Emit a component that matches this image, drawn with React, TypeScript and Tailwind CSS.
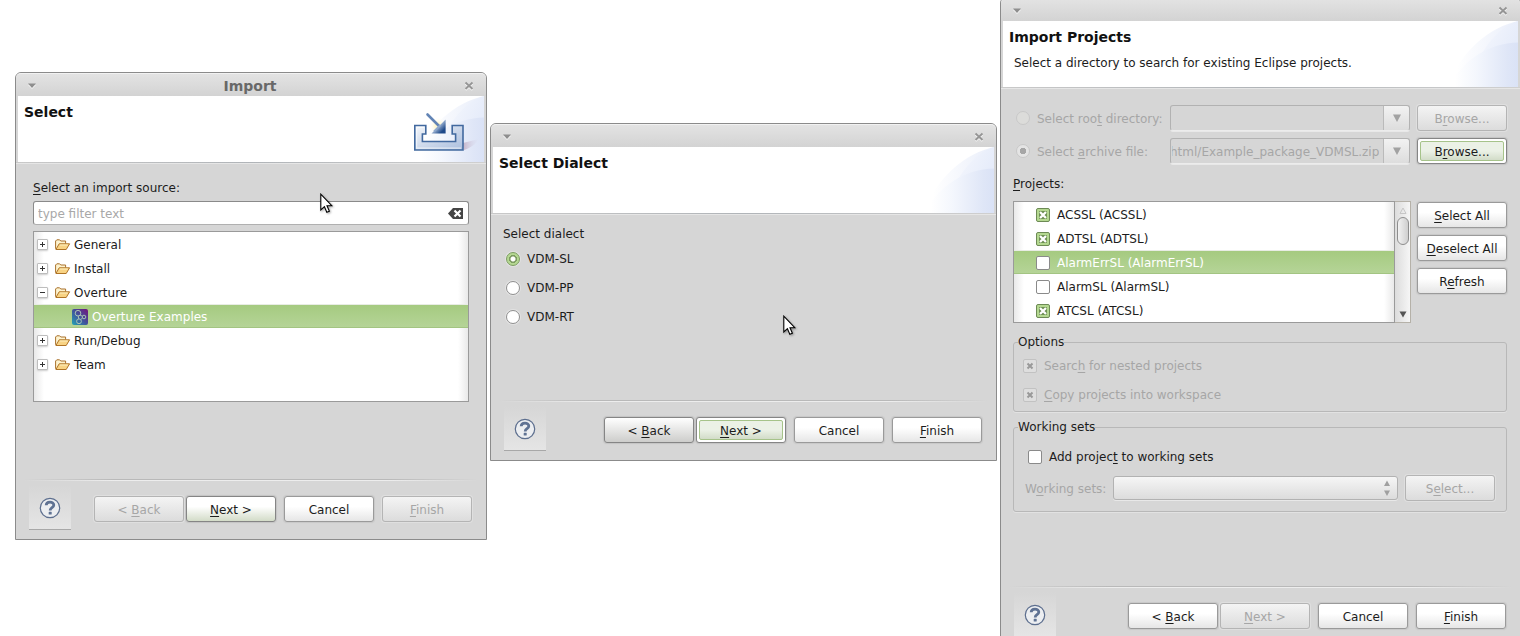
import { ReactNode, useEffect, useRef } from "react";

const FONT = "font-['DejaVu_Sans',sans-serif]";

type Tone = "plain" | "default" | "focused" | "hover";

function PushButton({ children, tone = "plain", disabled = false }: { children: ReactNode; tone?: Tone; disabled?: boolean }) {
  const base = "relative h-[26px] w-[90px] shrink-0 rounded-[3px] border pt-0.5 text-center leading-4 whitespace-nowrap";
  const look = disabled
    ? "border-[#b4b4b4] bg-linear-to-b from-[#f4f4f4] to-[#dcdcdc] text-[#a6a6a6] shadow-[0_0_0_1px_#dfdfdf]"
    : tone === "default"
      ? "border-[#858585] bg-linear-to-b from-white from-40% to-[#d3dcc8] text-[#1c1c1c] shadow-[0_0_1px_1px_#c4c4c4]"
      : tone === "hover"
        ? "border-[#858585] bg-linear-to-b from-white to-[#cdcdcb] text-[#1c1c1c] shadow-[0_0_1px_1px_#c4c4c4]"
        : tone === "focused"
          ? "border-[#858585] bg-white text-[#1c1c1c] shadow-[0_0_1px_1px_#c4c4c4]"
          : "border-[#9a9a9a] bg-linear-to-b from-white from-40% to-[#e6e6e6] text-[#1c1c1c] shadow-[0_0_1px_1px_#c8c8c8]";
  return (
    <button type="button" disabled={disabled} className={`${base} ${look}`}>
      {tone === "focused" ? (
        <span className="absolute inset-[2px] flex items-center justify-center rounded-[2px] border border-[#a6c38a] bg-linear-to-b from-[#ebf1e6] from-50% to-[#d2dcc8] pt-0.5">
          <span>{children}</span>
        </span>
      ) : (
        children
      )}
    </button>
  );
}

function U({ children }: { children: ReactNode }) {
  return <u className="underline underline-offset-2">{children}</u>;
}

function Rule() {
  return (
    <div className="mx-2">
      <div className="h-px bg-[linear-gradient(to_right,transparent,#b9b9b9_20%,#b9b9b9_80%,transparent)]" />
      <div className="h-px bg-[linear-gradient(to_right,transparent,#ededed_20%,#ededed_80%,transparent)]" />
    </div>
  );
}

function Swoosh({ id, withIcon = false }: { id: string; withIcon?: boolean }) {
  return (
    <svg width="74" height="66" viewBox="0 0 74 66" className="shrink-0" aria-hidden="true">
      <defs>
        <linearGradient id={`${id}a`} x1="0" x2="1">
          <stop offset="0.15" stopColor="#fff" />
          <stop offset="1" stopColor="#e9eefa" />
        </linearGradient>
        <linearGradient id={`${id}b`} x1="0" x2="1">
          <stop offset="0.1" stopColor="#fff" />
          <stop offset="0.4" stopColor="#f4f7fd" />
          <stop offset="0.85" stopColor="#dfe6f7" />
          <stop offset="1" stopColor="#dae2f6" />
        </linearGradient>
        <linearGradient id={`${id}c`} x1="0" x2="1" y2="0.4">
          <stop offset="0" stopColor="#f6f8fd" />
          <stop offset="1" stopColor="#e6ecfa" />
        </linearGradient>
        <linearGradient id={`${id}d`} x1="0" x2="1" y1="0" y2="1">
          <stop offset="0" stopColor="#f4f7fb" />
          <stop offset="0.6" stopColor="#c6d3e8" />
          <stop offset="1" stopColor="#a9bede" />
        </linearGradient>
        <linearGradient id={`${id}e`} x1="0" x2="1" y1="0" y2="1">
          <stop offset="0.4" stopColor="#b9cbe4" />
          <stop offset="0.8" stopColor="#1f4a8a" />
        </linearGradient>
        <linearGradient id={`${id}f`} x1="0" x2="1">
          <stop offset="0" stopColor="#c5b3c8" />
          <stop offset="1" stopColor="#dde3f5" stopOpacity="0.2" />
        </linearGradient>
        <radialGradient id={`${id}g`}>
          <stop offset="0.3" stopColor="#fdf7cf" />
          <stop offset="1" stopColor="#fff" stopOpacity="0" />
        </radialGradient>
      </defs>
      <path d="M2 66C20 27 45 7 74 0V66Z" fill={`url(#${id}a)`} />
      <path d="M36 36C46 18 58 5 74 0V22C60 23 48 28 36 36Z" fill={`url(#${id}c)`} />
      <path d="M4 66C20 38 45 22 74 21.5V66Z" fill={`url(#${id}b)`} />
      {withIcon && (
        <g>
          <path d="M54 54C60 52 66 48 69 43L53 47Z" fill={`url(#${id}f)`} />
          <circle cx="28" cy="30" r="9" fill={`url(#${id}g)`} />
          <path d="M4.8 29.5H15.8V38H12.4V45.5H45.6V38H42.2V29.5H53V54H4.8Z" fill={`url(#${id}d)`} stroke="#42699f" strokeWidth="1.6" />
          <path d="M6.6 31.3H14M6.6 31.3V52.2H51" fill="none" stroke="#fff" strokeOpacity="0.6" strokeWidth="1.2" />
          <path d="M17.5 18.5L28.5 29.5" stroke="#6284b5" strokeWidth="2.6" strokeLinecap="round" />
          <path d="M35.6 23.5V37.6H21.5Z" fill={`url(#${id}e)`} />
          <path d="M24 35.5L30.5 29" stroke="#8ea8cd" strokeWidth="2" />
        </g>
      )}
    </svg>
  );
}

function HelpButton() {
  return (
    <button
      type="button"
      aria-label="Help"
      className="flex h-[45px] w-[42px] items-center justify-center border-b border-[#a8a8a8] bg-linear-to-b from-[#d6d6d6] to-[#e5e5e5] pt-0.5"
    >
      <svg width="22" height="22" viewBox="0 0 22 22" aria-hidden="true">
        <circle cx="11" cy="11" r="9.7" fill="#eceef1" stroke="#5c6e8e" strokeWidth="1.2" />
        <path d="M7.2 8.3C7.2 4 14.8 4.1 14.8 8C14.8 10.7 11.2 10.6 11.2 13.4" fill="none" stroke="#5f7293" strokeWidth="2.8" />
        <rect x="9.7" y="14.8" width="3" height="2.8" rx="0.6" fill="#5f7293" />
      </svg>
    </button>
  );
}

function Dialog({
  className,
  title = "",
  heading,
  description,
  id,
  withIcon = false,
  buttons,
  children,
}: {
  className: string;
  title?: string;
  heading: string;
  description?: string;
  id: string;
  withIcon?: boolean;
  buttons: ReactNode;
  children: ReactNode;
}) {
  return (
    <section aria-label={heading} className={`flex min-w-0 flex-col rounded-t-[6px] border border-[#8b8b8b] bg-[#d6d6d6] ${className}`}>
      <div className="flex h-[23px] shrink-0 items-center justify-between rounded-t-[5px] border-t border-[#f2f2f2] bg-linear-to-b from-[#e3e3e3] to-[#d3d3d3] px-3 pt-0.5">
        <button type="button" aria-label="Window menu">
          <svg width="8" height="6" viewBox="0 0 8 6" className="block" aria-hidden="true">
            <path d="M0 2H8L4 6Z" fill="#f4f4f4" />
            <path d="M0 0.5H8L4 5Z" fill="#8e8e8e" />
          </svg>
        </button>
        <span className="text-[14px] leading-4 font-bold text-[#686868]">{title}</span>
        <button type="button" aria-label="Close">
          <svg width="10" height="10" viewBox="0 0 10 10" className="block" aria-hidden="true">
            <path d="M1.5 2.5L8.5 9M8.5 2.5L1.5 9" stroke="#f6f6f6" strokeWidth="2" />
            <path d="M1.5 1.5L8.5 8M8.5 1.5L1.5 8" stroke="#959595" strokeWidth="1.8" />
          </svg>
        </button>
      </div>
      <header className="mx-0.5 flex h-[66px] shrink-0 justify-between bg-white">
        <div className="flex flex-col gap-[10px] pt-2 pl-1.5">
          <h1 className="text-[14px] leading-4 font-bold text-[#111]">{heading}</h1>
          {description && <p className="pl-[5px] leading-4 text-[#1c1c1c]">{description}</p>}
        </div>
        <Swoosh id={id} withIcon={withIcon} />
      </header>
      <div className="h-px shrink-0 bg-linear-to-r from-[#c9c9c9] via-[#b0b4b8] to-[#d0d0d0]" />
      <div className="h-px shrink-0 bg-[#e6e6e6]" />
      {children}
      <footer className="mt-auto pb-[9px]">
        <Rule />
        <div className="flex items-start justify-between pr-[14px] pl-[13px]">
          <div className="pt-1">
            <HelpButton />
          </div>
          <div className="flex gap-2 pt-[15px]">{buttons}</div>
        </div>
      </footer>
    </section>
  );
}

function FolderIcon() {
  return (
    <svg width="16" height="12" viewBox="0 0 16 12" className="shrink-0" aria-hidden="true">
      <path d="M0.6 9.8V2L1.8 0.8H4.6L5.8 2H10.6V4.6" fill="#fdf3cf" stroke="#a9712c" />
      <path d="M0.9 10.5L4.2 4.8H14.6L11.2 10.5Z" fill="#f8d384" stroke="#b07426" />
      <path d="M4.8 6H12.8" stroke="#fdf0c0" />
    </svg>
  );
}

function TreeBranch({ label, open = false }: { label: string; open?: boolean }) {
  return (
    <div className="flex h-6 items-center pt-0.5 pl-[3px]">
      <button
        type="button"
        aria-label={open ? `Collapse ${label}` : `Expand ${label}`}
        className="mb-0.5 size-[11px] rounded-[1px] border border-[#bdbdbd] bg-white shadow-[0_1px_2px_#ccc]"
      >
        <svg width="9" height="9" viewBox="0 0 9 9" className="block" aria-hidden="true">
          <path d={open ? "M2 4.5H7" : "M2 4.5H7M4.5 2V7"} stroke="#333" />
        </svg>
      </button>
      <span className="flex items-center gap-[3px] pl-[7px]">
        <FolderIcon />
        <span>{label}</span>
      </span>
    </div>
  );
}

function OvertureIcon() {
  return (
    <svg width="16" height="16" viewBox="0 0 16 16" className="shrink-0" aria-hidden="true">
      <defs>
        <linearGradient id="ov" x1="0" x2="1" y1="1" y2="0">
          <stop offset="0" stopColor="#22a5b5" />
          <stop offset="0.5" stopColor="#41519b" />
          <stop offset="1" stopColor="#74127c" />
        </linearGradient>
      </defs>
      <rect width="16" height="16" rx="2" fill="url(#ov)" />
      <g fill="none" stroke="#a9c3b4">
        <circle cx="6" cy="4.2" r="2.8" />
        <circle cx="12" cy="8" r="1.8" />
        <circle cx="7" cy="12.3" r="2.4" />
        <path d="M6.3 7L6.8 10M8 6L10.3 7.2M8.6 10.6L10.5 9" />
      </g>
    </svg>
  );
}

function CheckBox({ id, checked = false, disabled = false }: { id: string; checked?: boolean; disabled?: boolean }) {
  return (
    <span className="grid size-[14px] shrink-0">
      <input
        id={id}
        type="checkbox"
        defaultChecked={checked}
        disabled={disabled}
        className="peer size-[14px] appearance-none rounded-[2px] border border-[#8a8a8a] bg-white [grid-area:1/1] checked:border-[#6d8a55] checked:bg-[#b4d890] disabled:border-[#c2c2c2] disabled:bg-[#dedede]"
      />
      <svg
        width="14"
        height="14"
        viewBox="0 0 14 14"
        className="pointer-events-none hidden [grid-area:1/1] peer-checked:block"
        aria-hidden="true"
      >
        {disabled ? (
          <path d="M4.5 4.5L9.5 9.5M9.5 4.5L4.5 9.5" stroke="#999" strokeWidth="2" />
        ) : (
          <g>
            <rect x="3" y="3" width="8" height="8" rx="1" fill="#6d8f52" />
            <path d="M4 4L10 10M10 4L4 10" stroke="#fff" strokeWidth="2.3" />
          </g>
        )}
      </svg>
    </span>
  );
}

function Radio({ id, name, checked = false, disabled = false }: { id: string; name: string; checked?: boolean; disabled?: boolean }) {
  return (
    <input
      id={id}
      type="radio"
      name={name}
      defaultChecked={checked}
      disabled={disabled}
      className={
        disabled
          ? "size-[14px] shrink-0 appearance-none rounded-full border border-[#c8c8c8] bg-[#dcdcda] checked:bg-[radial-gradient(circle,#a6a6a6_3px,#e4e4e4_3.5px)]"
          : "size-[14px] shrink-0 appearance-none rounded-full border border-[#8e8e8e] bg-white shadow-[0_0_0_1px_#e2e2e2] checked:border-[#7b9b60] checked:bg-[radial-gradient(circle,#ffffff_2px,#7d9b62_3px,#7d9b62_4px,#b5d892_4px)]"
      }
    />
  );
}

function Combo({ id, label, value }: { id: string; label: string; value: string }) {
  const field = useRef<HTMLInputElement>(null);
  useEffect(() => {
    if (field.current) field.current.scrollLeft = field.current.scrollWidth;
  }, []);
  return (
    <div className="flex h-[26px] min-w-0 flex-1 rounded-[3px] border border-[#b2b2b2] border-b-[#ececec] shadow-[0_1px_0_#e8e8e8]">
      <input
        ref={field}
        id={id}
        aria-label={label}
        disabled
        defaultValue={value}
        className="w-0 min-w-0 flex-1 bg-transparent pt-0.5 pr-1 pl-px text-[#a6a6a6]"
      />
      <button
        type="button"
        disabled
        aria-label="Show choices"
        className="flex w-[26px] items-center justify-center rounded-r-[3px] border-l border-[#bababa] bg-linear-to-b from-[#f2f2f2] to-[#dddddd]"
      >
        <svg width="8" height="8" viewBox="0 0 8 8" aria-hidden="true">
          <path d="M0 0.5H8L4 8Z" fill="#a2a2a2" />
        </svg>
      </button>
    </div>
  );
}

function Pointer({ className }: { className: string }) {
  return (
    <svg width="14" height="22" viewBox="0 0 14 22" className={`absolute drop-shadow-[1px_1px_1px_rgba(0,0,0,0.35)] ${className}`} aria-hidden="true">
      <path d="M0.8 1.2V17L4.4 13.6L6.8 19.3L9.4 18.2L7 12.7H11.8Z" fill="#fff" stroke="#000" strokeWidth="1.1" />
    </svg>
  );
}

const projects = [
  { name: "ACSSL (ACSSL)", checked: true },
  { name: "ADTSL (ADTSL)", checked: true },
  { name: "AlarmErrSL (AlarmErrSL)", checked: false, selected: true },
  { name: "AlarmSL (AlarmSL)", checked: false },
  { name: "ATCSL (ATCSL)", checked: true },
];

const listBg = "bg-[linear-gradient(to_right,#e9e9e9,#fff_10px,#fff_calc(100%-10px),#e9e9e9)]";
const selectedRow = "border-y border-t-[#e8ece4] border-b-[#a3c482] bg-linear-to-b from-[#a5ca80] to-[#b5d497] text-white";

function ImportDialog() {
  return (
    <Dialog
      id="sa"
      className="mt-[72px] min-h-[468px]"
      title="Import"
      heading="Select"
      withIcon
      buttons={
        <>
          <div className="flex gap-0.5">
            <PushButton disabled>
              &lt; <U>B</U>ack
            </PushButton>
            <PushButton tone="default">
              <U>N</U>ext &gt;
            </PushButton>
          </div>
          <PushButton>Cancel</PushButton>
          <PushButton disabled>
            <U>F</U>inish
          </PushButton>
        </>
      }
    >
      <div className="flex flex-col px-[17px] pt-4">
        <label htmlFor="filter" className="leading-4">
          <U>S</U>elect an import source:
        </label>
        <div className="mt-[5px] flex h-6 items-center rounded-[3px] border border-[#8a8a8a] border-b-[#b0b0b0] bg-white pr-[5px] pl-1">
          <input id="filter" type="text" placeholder="type filter text" className="min-w-0 flex-1 bg-transparent pt-0.5 placeholder:text-[#a8a8a8]" />
          <button type="button" aria-label="Clear filter">
            <svg width="15" height="11" viewBox="0 0 15 11" className="block" aria-hidden="true">
              <path d="M0 5.5L5 0H15V11H5Z" fill="#444" />
              <path d="M6.5 2.5L12.5 8.5M12.5 2.5L6.5 8.5" stroke="#fff" strokeWidth="2.2" />
            </svg>
          </button>
        </div>
        <div className={`mt-1.5 min-h-[171px] border border-[#9a9a9a] ${listBg}`}>
          <TreeBranch label="General" />
          <TreeBranch label="Install" />
          <TreeBranch label="Overture" open />
          <div className={`flex h-6 items-center gap-1 pt-0.5 pl-[38px] ${selectedRow}`}>
            <OvertureIcon />
            <span>Overture Examples</span>
          </div>
          <TreeBranch label="Run/Debug" />
          <TreeBranch label="Team" />
        </div>
      </div>
    </Dialog>
  );
}

function DialectDialog() {
  return (
    <Dialog
      id="sb"
      className="mt-[123px] min-h-[338px]"
      heading="Select Dialect"
      buttons={
        <>
          <div className="flex gap-0.5">
            <PushButton tone="hover">
              &lt; <U>B</U>ack
            </PushButton>
            <PushButton tone="focused">
              <U>N</U>ext &gt;
            </PushButton>
          </div>
          <PushButton>Cancel</PushButton>
          <PushButton>
            <U>F</U>inish
          </PushButton>
        </>
      }
    >
      <div role="radiogroup" aria-labelledby="dialect-label" className="px-3 pt-[11px]">
        <p id="dialect-label" className="leading-4">
          Select dialect
        </p>
        <div className="flex flex-col gap-3 pt-2 pl-[3px]">
          {["VDM-SL", "VDM-PP", "VDM-RT"].map((d, i) => (
            <div key={d} className="flex items-center gap-[7px] leading-4">
              <Radio id={d} name="dialect" checked={i === 0} />
              <label htmlFor={d} className="pt-px">
                {d}
              </label>
            </div>
          ))}
        </div>
      </div>
    </Dialog>
  );
}

function ProjectsDialog() {
  return (
    <Dialog
      id="sc"
      className="-mt-[3px] -mr-px min-h-[650px]"
      heading="Import Projects"
      description="Select a directory to search for existing Eclipse projects."
      buttons={
        <>
          <div className="flex gap-0.5">
            <PushButton>
              &lt; <U>B</U>ack
            </PushButton>
            <PushButton disabled>
              <U>N</U>ext &gt;
            </PushButton>
          </div>
          <PushButton>Cancel</PushButton>
          <PushButton>
            <U>F</U>inish
          </PushButton>
        </>
      }
    >
      <div className="flex flex-col pt-4 pr-[13px] pl-3">
        <div className="flex flex-col gap-[7px]">
          <div className="flex items-center gap-[7px]">
            <div className="flex w-[150px] shrink-0 items-center gap-[7px] pl-[3px] text-[#a6a6a6]">
              <Radio id="root" name="source" disabled />
              <label htmlFor="root" className="pt-0.5 whitespace-nowrap">
                Select roo<U>t</U> directory:
              </label>
            </div>
            <Combo id="root-path" label="Root directory" value="" />
            <PushButton disabled>
              B<U>r</U>owse...
            </PushButton>
          </div>
          <div className="flex items-center gap-[7px]">
            <div className="flex w-[150px] shrink-0 items-center gap-[7px] pl-[3px] text-[#a6a6a6]">
              <Radio id="archive" name="source" checked disabled />
              <label htmlFor="archive" className="pt-0.5 whitespace-nowrap">
                Select <U>a</U>rchive file:
              </label>
            </div>
            <Combo id="archive-path" label="Archive file" value="html/Example_package_VDMSL.zip" />
            <PushButton tone="focused">
              B<U>r</U>owse...
            </PushButton>
          </div>
        </div>

        <h2 className="mt-3 leading-4">
          <U>P</U>rojects:
        </h2>
        <div className="mt-[9px] flex">
          <ul className={`min-w-0 flex-1 border border-[#9a9a9a] ${listBg}`}>
            {projects.map((p) => (
              <li key={p.name} className={`flex h-6 items-center gap-[7px] pt-0.5 pl-[22px] ${p.selected ? selectedRow : ""}`}>
                <CheckBox id={p.name} checked={p.checked} />
                <label htmlFor={p.name}>{p.name}</label>
              </li>
            ))}
          </ul>
          <div className="flex w-4 flex-col items-center border-y border-r border-[#b5b1a8] bg-linear-to-r from-[#dcdcdc] to-[#f6f6f6] pt-[5px] pb-1">
            <svg width="8" height="7" viewBox="0 0 8 7" aria-hidden="true">
              <path d="M1 6.5L4 1L7 6.5Z" fill="none" stroke="#c6c6c6" />
            </svg>
            <div className="mt-[3px] h-7 w-3 rounded-full border border-[#8e8e8e] bg-linear-to-r from-[#f2f2f2] to-[#cfcfcf]" />
            <svg width="8" height="7" viewBox="0 0 8 7" className="mt-auto" aria-hidden="true">
              <path d="M0.5 0.5H7.5L4 6.5Z" fill="#555" />
            </svg>
          </div>
          <div className="ml-1.5 flex flex-col gap-[7px] pt-px">
            <PushButton>
              <U>S</U>elect All
            </PushButton>
            <PushButton>
              <U>D</U>eselect All
            </PushButton>
            <PushButton>
              R<U>e</U>fresh
            </PushButton>
          </div>
        </div>

        <fieldset className="mt-[11px] flex flex-col gap-3 rounded-[3px] border border-[#b8b8b8] pt-[7px] pr-3 pb-2 pl-[9px] text-[#a6a6a6] shadow-[0_1px_0_#e2e2e2]">
          <legend className="-ml-[5px] leading-4 text-[#1c1c1c]">Options</legend>
          <div className="flex items-center gap-[7px] leading-4">
            <CheckBox id="nested" checked disabled />
            <label htmlFor="nested" className="pt-px">
              Searc<U>h</U> for nested projects
            </label>
          </div>
          <div className="flex items-center gap-[7px] leading-4">
            <CheckBox id="copy" checked disabled />
            <label htmlFor="copy" className="pt-px">
              <U>C</U>opy projects into workspace
            </label>
          </div>
        </fieldset>

        <fieldset className="mt-[7px] flex flex-col rounded-[3px] border border-[#b8b8b8] pt-[13px] pr-[11px] pb-[10px] pl-[11px] shadow-[0_1px_0_#e2e2e2]">
          <legend className="-ml-[7px] leading-4">Working sets</legend>
          <div className="flex items-center gap-[7px] pl-[3px] leading-4">
            <CheckBox id="add" />
            <label htmlFor="add" className="pt-px">
              Add projec<U>t</U> to working sets
            </label>
          </div>
          <div className="mt-[10px] flex items-center">
            <label htmlFor="sets" className="w-[88px] shrink-0 pt-px whitespace-nowrap text-[#a6a6a6]">
              W<U>o</U>rking sets:
            </label>
            <div className="relative min-w-0 flex-1">
              <select
                id="sets"
                disabled
                className="block h-6 w-full appearance-none rounded-[3px] border border-[#b2b2b2] bg-linear-to-b from-[#f6f6f6] to-[#dcdcdc] opacity-100 shadow-[0_1px_0_#e8e8e8]"
              />
              <svg width="6" height="18" viewBox="0 0 6 18" className="pointer-events-none absolute top-[3px] right-2" aria-hidden="true">
                <path d="M0 7L3 1.5L6 7ZM0 11.5H6L3 17Z" fill="#a0a0a0" />
              </svg>
            </div>
            <div className="ml-[7px]">
              <PushButton disabled>
                S<U>e</U>lect...
              </PushButton>
            </div>
          </div>
        </fieldset>
      </div>
    </Dialog>
  );
}

export default function App() {
  return (
    <main className={`relative h-screen overflow-hidden bg-white text-[12px] text-[#1c1c1c] ${FONT}`}>
      <div className="grid grid-cols-[472fr_507fr_520fr] items-start gap-[3px] pl-[15px]">
        <ImportDialog />
        <DialectDialog />
        <ProjectsDialog />
      </div>
      <Pointer className="top-[193px] left-[320px]" />
      <Pointer className="top-[315px] left-[783px]" />
    </main>
  );
}
